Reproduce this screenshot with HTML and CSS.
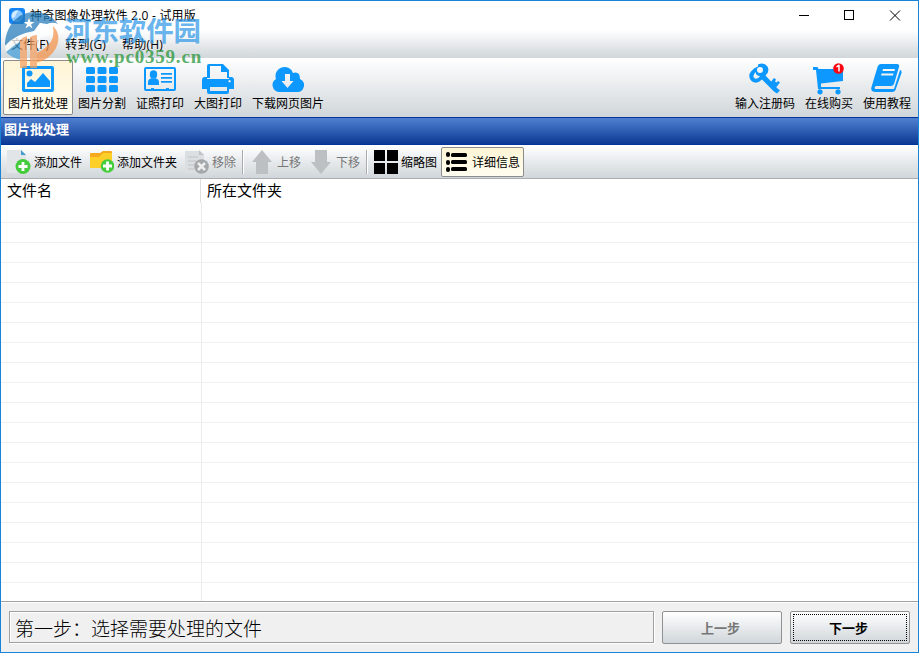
FILE: index.html
```html
<!DOCTYPE html>
<html lang="zh-CN">
<head>
  <meta charset="UTF-8">
  <title>神奇图像处理软件 2.0 - 试用版</title>
  <link rel="stylesheet" href="styles.css">
</head>
<body>
  <div class="window">
    <header class="titlebar">
      <svg class="app-icon" viewBox="0 0 16 16">
        <rect width="16" height="16" rx="3" fill="#1683f4"/>
        <circle cx="8" cy="8" r="6" fill="#8cc8ff"/>
        <path d="M3 7a5 5 0 0 1 6-4L7 6l-1 3-3 1z" fill="#d5edff"/>
        <path d="M8 12l4-5 1 3-3 3z" fill="#4ba4f7"/>
      </svg>
      <span class="title">神奇图像处理软件 2.0 - 试用版</span>
      <div class="controls">
        <svg viewBox="0 0 46 28"><path d="M19 13.500h10"/></svg>
        <svg viewBox="0 0 46 28"><rect x="18.500" y="8.500" width="9" height="9"/></svg>
        <svg viewBox="0 0 46 28"><path d="M18 8.500l10 10M28 8.500l-10 10"/></svg>
      </div>
    </header>

    <nav class="menu">
      <span>文件(F)</span>
      <span>转到(G)</span>
      <span>帮助(H)</span>
    </nav>

    <!-- 主工具栏 -->
    <div class="toolbar">
      <button class="tool active">
        <svg viewBox="0 0 32 32">
          <path fill-rule="evenodd" d="M2 3h28a2 2 0 0 1 2 2v22a2 2 0 0 1-2 2H2a2 2 0 0 1-2-2V5a2 2 0 0 1 2-2zm1 3v20h26V6z"/>
          <circle cx="7.500" cy="10.500" r="3"/>
          <path d="M5 24v-4l4-4 4 3 8-9 7 8v6z"/>
        </svg>
        <span>图片批处理</span>
      </button>
      <button class="tool">
        <svg viewBox="0 0 32 32">
          <rect x="0" y="4" width="9" height="7" rx="1.500"/><rect x="11.500" y="4" width="9" height="7" rx="1.500"/><rect x="23" y="4" width="9" height="7" rx="1.500"/>
          <rect x="0" y="13" width="9" height="7" rx="1.500"/><rect x="11.500" y="13" width="9" height="7" rx="1.500"/><rect x="23" y="13" width="9" height="7" rx="1.500"/>
          <rect x="0" y="22" width="9" height="7" rx="1.500"/><rect x="11.500" y="22" width="9" height="7" rx="1.500"/><rect x="23" y="22" width="9" height="7" rx="1.500"/>
        </svg>
        <span>图片分割</span>
      </button>
      <button class="tool">
        <svg viewBox="0 0 32 32">
          <path fill-rule="evenodd" d="M2 4h28a2 2 0 0 1 2 2v20a2 2 0 0 1-2 2H2a2 2 0 0 1-2-2V6a2 2 0 0 1 2-2zm0 2v20h5v-1h3v1h12v-1h3v1h5V6z"/>
          <ellipse cx="9.500" cy="11.500" rx="3.700" ry="4.200"/>
          <path d="M4 22v-3q0-3 4-4l1.500 1 1.500-1q4 1 4 4v3z"/>
          <path d="M17 10h11v1.800H17zM17 14h11v1.800H17zM17 18h11v1.800H17z"/>
        </svg>
        <span>证照打印</span>
      </button>
      <button class="tool">
        <svg viewBox="0 0 32 32">
          <path fill-rule="evenodd" d="M7 1h14l6 6v8H5V3q0-2 2-2zm1 2v12h17V9h-6V3z"/>
          <path fill-rule="evenodd" d="M3 14h2v2h22v-2h2q3 0 3 3v9h-5v3q0 2-2 2H7q-2 0-2-2v-3H0v-9q0-3 3-3zm5 10v4h17v-4zm19.500-7a1.200 1.200 0 1 0 .1 0z"/>
        </svg>
        <span>大图打印</span>
      </button>
      <button class="tool">
        <svg viewBox="0 0 32 32">
          <path fill-rule="evenodd" d="M7 29a7 7 0 0 1-3-13A9 9 0 0 1 21 10q7-2 7 6a6.800 6.800 0 0 1-3 13zm6-18v7H9.500l6 7 6-7H18v-7z"/>
        </svg>
        <span>下载网页图片</span>
      </button>
      <div class="tool-group">
        <button class="tool">
          <svg viewBox="0 0 32 32">
            <path fill-rule="evenodd" d="M9 1.500q6-2.500 9.500 2 2.500 5-2 9l12 13 2.500 2-3 3-3-2-12-12q-5 5-10 2-5-5-1-10 3-4 7-5zm2 2.500a3 3 0 0 0 0 6 3 3 0 0 0 0-6zM6.500 9q-4 5-.5 6.500 3 1 5-2.500-4 0-4.500-4z"/>
            <path d="M21 20l4-5 2 1.500-1 2 1.500 1 1.500-1.500 2 1.500-4 5z"/>
          </svg>
          <span>输入注册码</span>
        </button>
        <button class="tool">
          <svg viewBox="0 0 32 32">
            <path d="M0 4h4q1 0 1.500 2H30v12L8 20.500 8 24h19v2H5L3 7H0z"/>
            <circle cx="7" cy="28.800" r="2.600"/><circle cx="25" cy="28.800" r="2.600"/>
            <circle cx="25.500" cy="5.500" r="5.300" fill="#fa0512"/>
            <path d="M23.500 4l2-1.500h.5v6" fill="none" stroke="#fff" stroke-width="1.500"/>
          </svg>
          <span>在线购买</span>
        </button>
        <button class="tool">
          <svg viewBox="0 0 32 32">
            <path fill-rule="evenodd" d="M10 1h16q3 0 2 3l-5 17q-1 2-3 2H5q-2 1-1 3h19l6-19q2 0 1.500 3l-6 17q-1 2-3 2H5q-6 0-4.500-5L6.500 4q1-3 3.500-3zm2 5l-.5 2h12l.5-2zm-1.500 4.500L10 12.500h12l.5-2z"/>
          </svg>
          <span>使用教程</span>
        </button>
      </div>
    </div>

    <div class="section-title">图片批处理</div>

    <!-- 文件操作 -->
    <div class="actions">
      <button class="action">
        <svg viewBox="0 0 24 24">
          <path d="M0 0h14l5 5v18H0z" fill="#e2e5e7"/><path d="M14 0l5 5h-5z" fill="#459dcb"/>
          <circle cx="16" cy="16.500" r="7.500" fill="#45cc3d"/><path d="M16 12v9M11.500 16.500h9" stroke="#fff" stroke-width="2.800"/>
        </svg>
        <span>添加文件</span>
      </button>
      <button class="action">
        <svg viewBox="0 0 24 24">
          <path d="M0 4q0-1 1-1h9l3-2h8q1 0 1 1v15H0z" fill="#f7a91e"/><path d="M0 7h9l4-4h9v14q0 1-1 1H1q-1 0-1-1z" fill="#ffcf29"/>
          <circle cx="17.500" cy="16" r="6.800" fill="#45cc3d"/><path d="M17.500 11.500v9M13 16h9" stroke="#fff" stroke-width="2.800"/>
        </svg>
        <span>添加文件夹</span>
      </button>
      <button class="action disabled">
        <svg viewBox="0 0 24 24">
          <path d="M0 1h14l5 4v18H0z" fill="#dcdfe1"/><path d="M14 0l5 5h-5z" fill="#bfc3c5"/><path d="M3 7h10M3 11h8M3 15h6M3 19h6" stroke="#bfc3c5"/>
          <circle cx="16.500" cy="16.500" r="7.300" fill="#a4a8aa"/><path d="M13 13l7 7M20 13l-7 7" stroke="#eee" stroke-width="2.500"/>
        </svg>
        <span>移除</span>
      </button>
      <i class="separator"></i>
      <button class="action disabled">
        <svg viewBox="0 0 24 24"><path d="M12 0l10 12h-4v12H6V12H2z" fill="#bdc0c2"/></svg>
        <span>上移</span>
      </button>
      <button class="action disabled">
        <svg viewBox="0 0 24 24"><path d="M12 24L2 12h4V0h12v12h4z" fill="#bdc0c2"/></svg>
        <span>下移</span>
      </button>
      <i class="separator"></i>
      <button class="action">
        <svg viewBox="0 0 24 24"><path d="M0 0h11v11H0zM13 0h11v11H13zM0 13h11v11H0zM13 13h11v11H13z"/></svg>
        <span>缩略图</span>
      </button>
      <button class="action active">
        <svg viewBox="0 0 24 24">
          <rect x="1" y="2" width="4" height="5" rx="2"/><rect x="6" y="3" width="16" height="4" rx="1.500"/>
          <rect x="1" y="10" width="4" height="5" rx="2"/><rect x="6" y="10" width="16" height="4" rx="1.500"/>
          <rect x="1" y="17" width="4" height="5" rx="2"/><rect x="6" y="17" width="16" height="4" rx="1.500"/>
        </svg>
        <span>详细信息</span>
      </button>
    </div>

    <main class="list">
      <div class="list-head"><span>文件名</span><span>所在文件夹</span></div>
      <div class="list-body"><div class="column"></div></div>
    </main>

    <footer class="footer">
      <div class="status">第一步：选择需要处理的文件</div>
      <button class="step" disabled>上一步</button>
      <button class="step next">下一步</button>
    </footer>
  </div>

  <!-- 水印 -->
  <div class="watermark">
    <svg viewBox="0 0 60 60">
      <path d="M1 37C1 17 14 3 30 3q15 0 24 12-6-3-13 1l-5-2-6 9Q12 26 1 37z" fill="#227abb"/>
      <path d="M2 43q5-9 15-14v22q-11-3-15-8z" fill="#429fd9"/>
      <path d="M1 37q10-12 29-15l6-8 7 1-4 8q10-2 12 3-7-1-15 3v10h-5V28q-15 2-29 15z" fill="#fff"/>
      <path d="M25 9l1.500 4h4L27 15.500l1.500 4L25 17l-3.500 2.500 1.500-4-3.500-2.500h4z" fill="#fff"/>
      <path d="M49 17q9 9 3 22-6 12-21 15v-9q15-7 18-17 1-6 0-11z" fill="#f5934a"/>
      <path d="M16 31q3-3 7-4v32h-7zM26 28q3-2 7-2v33h-7z" fill="#f6a060"/>
    </svg>
    <div class="mark-text">
      <b>河东软件园</b>
      <em>www.pc0359.cn</em>
    </div>
  </div>
</body>
</html>
```
FILE: styles.css
```css
* {
  margin: 0;
  padding: 0;
  box-sizing: border-box;
}

body {
  height: 653px;
  overflow: hidden;
  font: 12px/16px "Noto Sans CJK SC", sans-serif;
  color: #000;
}

button {
  font: inherit;
  color: inherit;
  background: none;
  border: 1px solid transparent;
  white-space: nowrap;
}

svg {
  display: block;
  flex-shrink: 0;
}

.window {
  display: flex;
  flex-direction: column;
  height: 653px;
  border: 1px solid #1883d7;
  background: #f0f0f0;
}

.titlebar {
  display: flex;
  align-items: center;
  height: 29px;
  padding-left: 8px;
  background: #fff;
}

.app-icon {
  width: 16px;
  height: 16px;
}

.title {
  margin-left: 5px;
  font-family: "Open Sans", "Noto Sans CJK SC", sans-serif;
  letter-spacing: 0.22px;
}

.controls {
  display: flex;
  margin-left: auto;
}

.controls svg {
  width: 46px;
  height: 28px;
  fill: none;
  stroke: #000;
}

.menu {
  display: flex;
  gap: 16px;
  height: 28px;
  padding: 7px 10px 0;
  background: linear-gradient(#fff, #d0d6da);
  font-family: "Open Sans", "Noto Sans CJK SC", sans-serif;
  letter-spacing: 0.2px;
}

.toolbar {
  display: flex;
  align-items: flex-start;
  height: 59px;
  padding: 2px 2px 0;
  background: linear-gradient(#fff, #d0d6da);
}

.tool-group {
  display: flex;
  margin-left: auto;
}

.tool {
  display: flex;
  flex-direction: column;
  align-items: center;
  height: 55px;
  padding: 2px 4px 0;
}

.tool svg {
  width: 32px;
  height: 32px;
  fill: #0c98ff;
}

.tool.active,
.action.active {
  border-color: #8c8c8c;
  border-radius: 2px;
  background: linear-gradient(#fff4d5, #fffdf0);
}

.section-title {
  height: 28px;
  padding: 3px;
  border: solid #003399;
  border-width: 1px 0;
  background: linear-gradient(#5080d0, #0b3995);
  color: #fff;
  font-size: 13px;
  font-weight: bold;
}

.actions {
  display: flex;
  align-items: center;
  height: 34px;
  padding: 1px 2px 0;
  border-bottom: 1px solid #aaadb0;
  background: linear-gradient(#fff, #d0d6da);
}

.action {
  display: flex;
  align-items: center;
  gap: 3px;
  height: 30px;
  padding: 0 3px;
}

.action svg {
  width: 24px;
  height: 24px;
}

.action span {
  margin-top: -1px;
}

.action.disabled {
  color: #777;
}

.separator {
  width: 2px;
  height: 24px;
  margin: 0 2px;
  background: #a8abad;
  border-right: 1px solid #fff;
}

.list {
  flex: 1;
  display: flex;
  flex-direction: column;
  background: #fff;
}

.list-head {
  display: flex;
  height: 24px;
  font-size: 15px;
  line-height: 21px;
}

.list-head span {
  padding-left: 6px;
}

.list-head span:first-child {
  width: 200px;
  border-right: 1px solid #dedede;
}

.list-body {
  flex: 1;
  background: repeating-linear-gradient(transparent 0 19px, #f0f0f0 19px 20px);
}

.column {
  width: 201px;
  height: 100%;
  border-right: 1px solid #ebebeb;
}

.footer {
  display: flex;
  height: 51px;
  padding: 8px;
  border-top: 1px solid #a0a0a0;
  box-shadow: inset 0 1px #fff;
}

.status {
  width: 645px;
  height: 32px;
  margin: 1px 8px 0 0;
  padding-left: 5px;
  border: 1px solid #a0a0a0;
  box-shadow: 1px 1px #fff, inset 1px 1px #fff;
  font-size: 19px;
  font-weight: 300;
  line-height: 32px;
}

.step {
  width: 120px;
  height: 33px;
  margin: 1px 8px 0 0;
  padding-right: 3px;
  border: 1px solid #8f9193;
  border-radius: 2px;
  background: linear-gradient(#fff, #d0d6da);
  font-size: 13px;
  font-weight: bold;
}

.step:disabled {
  color: #777;
}

.next {
  margin-right: 0;
  outline: 1px dotted #000;
  outline-offset: -4px;
}

.watermark {
  position: absolute;
  left: 4px;
  top: 9px;
  display: flex;
  opacity: 0.72;
  pointer-events: none;
}

.watermark svg {
  width: 60px;
  height: 60px;
}

.mark-text {
  display: flex;
  flex-direction: column;
}

.mark-text b {
  height: 37px;
  color: #3199e7;
  font-size: 27.4px;
  line-height: 40px;
}

.mark-text em {
  margin-left: 2px;
  color: #219333;
  font: bold 19px/22px "Liberation Serif", serif;
  letter-spacing: 0.8px;
}
```
